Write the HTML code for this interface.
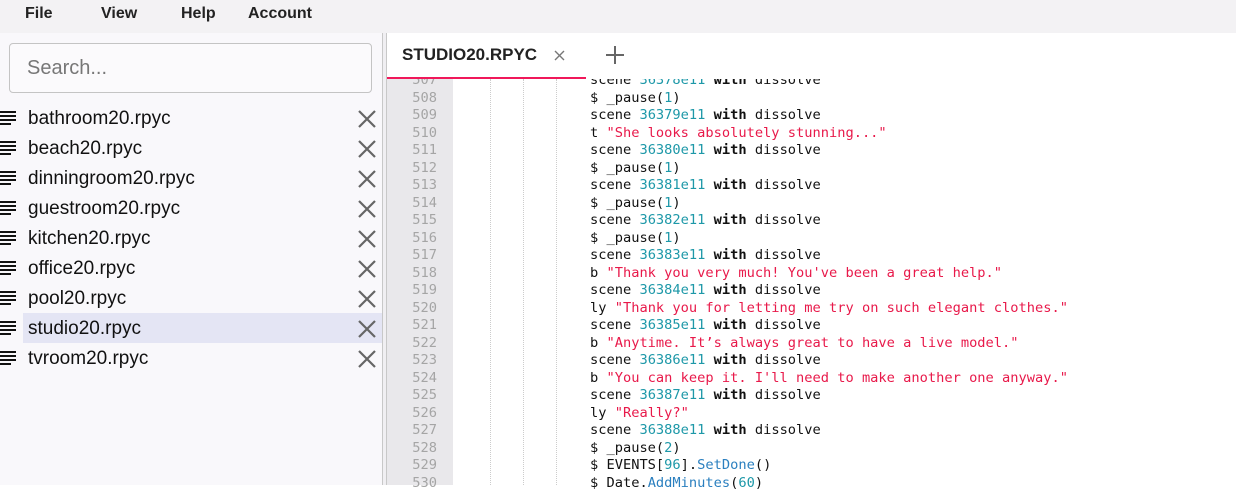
<!DOCTYPE html>
<html><head><meta charset="utf-8"><style>
*{margin:0;padding:0;box-sizing:border-box}
body{width:1236px;height:485px;overflow:hidden;background:#fff;font-family:"Liberation Sans",Roboto,sans-serif;position:relative}
.menu{position:absolute;left:0;top:0;width:1236px;height:33px;background:#f3f2f4}
.menu span{position:absolute;top:5px;font-size:16px;font-weight:bold;color:#222}
.left{position:absolute;left:0;top:33px;width:382px;height:452px;background:#f9f8fb}
.split{position:absolute;left:382px;top:33px;width:5px;height:452px;background:#f0eff2;border-left:1px solid #c8c8c8;border-right:1px solid #c8c8c8}
.search{position:absolute;left:9px;top:10px;width:363px;height:50px;border:1px solid #c4c4c4;border-radius:4px;background:#fbfafc;font-size:20px;color:#777;padding:13px 17px}
.row{position:absolute;left:0;width:382px;height:30px}
.row.sel .bg{position:absolute;left:23px;top:0;right:0;height:30px;background:#e4e5f4}
.row .ic{position:absolute;left:0;top:8px;width:16px}
.row .ic i{display:block;height:2px;background:#111;margin-bottom:2px}
.row .t{position:absolute;left:28px;top:5px;font-size:19px;color:#111}
.row svg{position:absolute;left:357px;top:6px}
.tabbar{position:absolute;left:387px;top:33px;width:849px;height:46px;background:#fff;z-index:2}
.tab{position:absolute;left:0;top:0;width:199px;height:46px;border-bottom:2px solid #f0185a}
.tab .t{position:absolute;left:15px;top:12px;font-size:17px;font-weight:bold;color:#222}
.gut{position:absolute;left:387px;top:33px;width:66px;height:452px;background:#e9e8eb}
.code{position:absolute;left:387px;top:72px;font-family:"DejaVu Sans Mono",monospace;font-size:13.7px;line-height:17.5px;white-space:pre}
.ln{position:absolute;left:0;width:50px;text-align:right;color:#a5a5a5}
.cl{position:absolute;left:203px;color:#111}
.n{color:#1d98a8}.s{color:#e8194a}.b{font-weight:bold}.f{color:#2a7fbf}
.g{position:absolute;top:79px;height:406px;border-left:1px dotted #ccc}
</style></head><body>
<div class="menu"><span style="left:25px">File</span><span style="left:101px">View</span><span style="left:181px">Help</span><span style="left:248px">Account</span></div>
<div class="left">
<div class="search">Search...</div>
</div>
<div id="rows"></div>
<div class="split"></div>
<div class="gut"></div>
<div class="g" style="left:490px"></div><div class="g" style="left:523px"></div><div class="g" style="left:556px"></div>
<div class="code" id="code"></div>
<div class="tabbar"><div class="tab"><span class="t">STUDIO20.RPYC</span>
<svg style="position:absolute;left:167px;top:17px" width="11" height="11" viewBox="0 0 11 11"><path d="M1 1L10 10M10 1L1 10" stroke="#777" stroke-width="1.4"/></svg></div>
<svg style="position:absolute;left:218px;top:12px" width="20" height="20" viewBox="0 0 20 20"><path d="M10 1V19M1 10H19" stroke="#666" stroke-width="2"/></svg>
</div>
<script>
var f=["bathroom20.rpyc","beach20.rpyc","dinningroom20.rpyc","guestroom20.rpyc","kitchen20.rpyc","office20.rpyc","pool20.rpyc","studio20.rpyc","tvroom20.rpyc"],h="";
f.forEach(function(n,i){h+='<div class="row'+(i==7?' sel':'')+'" style="top:'+(103+i*30)+'px"><div class="bg"></div><div class="ic"><i></i><i></i><i></i><i style="width:11px"></i></div><span class="t">'+n+'</span><svg width="20" height="20" viewBox="0 0 20 20"><path d="M2 2L18 18M18 2L2 18" stroke="#666" stroke-width="2.2"/></svg></div>'});
document.getElementById('rows').innerHTML=h;
function sc(n){return 'scene <span class="n">'+n+'</span> <span class="b">with</span> dissolve'}
var p='$ _pause(<span class="n">1</span>)';
function q(a,t){return a+' <span class="s">"'+t+'"</span>'}
var L=[sc('36378e11'),p,sc('36379e11'),q('t','She looks absolutely stunning...'),sc('36380e11'),p,sc('36381e11'),p,sc('36382e11'),p,sc('36383e11'),q('b',"Thank you very much! You've been a great help."),sc('36384e11'),q('ly','Thank you for letting me try on such elegant clothes.'),sc('36385e11'),q('b','Anytime. It’s always great to have a live model.'),sc('36386e11'),q('b',"You can keep it. I'll need to make another one anyway."),sc('36387e11'),q('ly','Really?'),sc('36388e11'),'$ _pause(<span class="n">2</span>)','$ EVENTS[<span class="n">96</span>].<span class="f">SetDone</span>()','$ Date.<span class="f">AddMinutes</span>(<span class="n">60</span>)'];
var c="";L.forEach(function(l,i){c+='<div class="ln" style="top:'+(i*17.5)+'px">'+(507+i)+'</div><div class="cl" style="top:'+(i*17.5)+'px">'+l+'</div>'});
document.getElementById('code').innerHTML=c;
</script>
</body></html>
